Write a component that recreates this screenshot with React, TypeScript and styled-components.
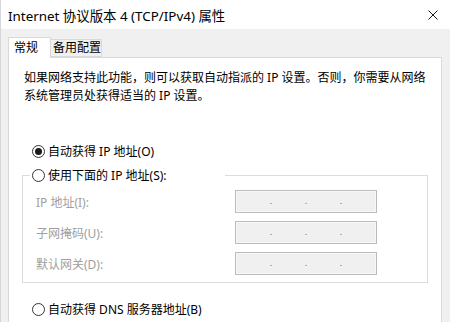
import React, { useState } from 'react';
import styled, { createGlobalStyle } from 'styled-components';

const GlobalStyle = createGlobalStyle`
  html, body {
    margin: 0;
    padding: 0;
    background: #f0f0f0;
  }
  * {
    box-sizing: border-box;
  }
`;

const FONT = `"Noto Sans", "Noto Sans CJK SC", sans-serif`;

type Mode = 'auto' | 'manual';

const App = () => {
  const [ipMode, setIpMode] = useState<Mode>('auto');
  const [dnsAuto, setDnsAuto] = useState(false);

  const fields = ['IP 地址(I):', '子网掩码(U):', '默认网关(D):'];

  return (
    <>
      <GlobalStyle />
      <Window>
        <TitleBar>
          <Title>Internet 协议版本 4 (TCP/IPv4) 属性</Title>
          <CloseButton aria-label="关闭">
            <svg width="10" height="10" viewBox="0 0 10 10">
              <path d="M0.5 0.5 L9.5 9.5 M9.5 0.5 L0.5 9.5" stroke="#1a1a1a" strokeWidth="1" fill="none" />
            </svg>
          </CloseButton>
        </TitleBar>
        <Body>
          <TabStrip>
            <Tab active>常规</Tab>
            <Tab>备用配置</Tab>
          </TabStrip>
          <Panel>
            <Description>
              如果网络支持此功能，则可以获取自动指派的 IP 设置。否则，你需要从网络
              <br />
              系统管理员处获得适当的 IP 设置。
            </Description>

            <RadioRow onClick={() => setIpMode('auto')}>
              <RadioCircle checked={ipMode === 'auto'} />
              <span>自动获得 IP 地址(O)</span>
            </RadioRow>

            <GroupBox>
              <GroupLegend onClick={() => setIpMode('manual')}>
                <RadioCircle checked={ipMode === 'manual'} />
                <span>使用下面的 IP 地址(S):</span>
              </GroupLegend>
              {fields.map((label) => (
                <FieldRow key={label}>
                  <FieldLabel>{label}</FieldLabel>
                  <IpBox>
                    <IpSegment />
                    <IpDot>.</IpDot>
                    <IpSegment />
                    <IpDot>.</IpDot>
                    <IpSegment />
                    <IpDot>.</IpDot>
                    <IpSegment />
                  </IpBox>
                </FieldRow>
              ))}
            </GroupBox>

            <DnsRow onClick={() => setDnsAuto(true)}>
              <RadioCircle checked={dnsAuto} />
              <span>自动获得 DNS 服务器地址(B)</span>
            </DnsRow>
          </Panel>
        </Body>
      </Window>
    </>
  );
};

export default App;

const Window = styled.div`
  width: 450px;
  height: 322px;
  overflow: hidden;
  border-left: 1px solid #d6d6d6;
  font-family: ${FONT};
  font-size: 12px;
  color: #000;
  background: #f0f0f0;
`;

const TitleBar = styled.div`
  display: flex;
  align-items: center;
  justify-content: space-between;
  height: 29px;
  padding: 1px 0 0 7px;
  background: #fff;
`;

const Title = styled.span`
  font-size: 13.4px;
  color: #000;
  white-space: nowrap;
`;

const CloseButton = styled.div`
  display: flex;
  align-items: center;
  justify-content: center;
  width: 46px;
  height: 28px;
  padding-left: 12px;
`;

const Body = styled.div`
  padding: 0 8px 0 7px;
`;

const TabStrip = styled.div`
  display: flex;
  align-items: flex-end;
  height: 28px;
  position: relative;
  z-index: 1;
`;

const Tab = styled.div<{ active?: boolean }>`
  display: flex;
  align-items: center;
  width: ${(p) => (p.active ? '43px' : '51px')};
  height: ${(p) => (p.active ? '21px' : '18px')};
  margin-bottom: ${(p) => (p.active ? '-1px' : '0')};
  padding: ${(p) => (p.active ? '0 0 1px 5px' : '0 0 0 2px')};
  background: ${(p) => (p.active ? '#fff' : '#f0f0f0')};
  border: 1px solid #d9d9d9;
  border-bottom: ${(p) => (p.active ? 'none' : '1px solid #d9d9d9')};
  border-left: ${(p) => (p.active ? '1px solid #d9d9d9' : 'none')};
  white-space: nowrap;
  line-height: 16px;
`;

const Panel = styled.div`
  height: 300px;
  padding: 11px 13px 0 13px;
  background: #fff;
  border: 1px solid #d9d9d9;
`;

const Description = styled.p`
  margin: 0 0 0 2px;
  line-height: 18px;
  white-space: nowrap;
`;

const RadioRow = styled.div`
  display: flex;
  align-items: center;
  gap: 3px;
  height: 19px;
  margin: 37px 0 0 10px;
  line-height: 19px;
  cursor: default;
  white-space: nowrap;
`;

const DnsRow = styled(RadioRow)`
  margin-top: 17px;
`;

const RadioCircle = styled.span<{ checked: boolean }>`
  position: relative;
  flex: none;
  width: 13px;
  height: 13px;
  border: 1px solid #333;
  border-radius: 50%;
  background: #fff;

  &::after {
    content: '';
    position: absolute;
    top: 2px;
    left: 2px;
    width: 7px;
    height: 7px;
    border-radius: 50%;
    background: #1a1a1a;
    display: ${(p) => (p.checked ? 'block' : 'none')};
  }
`;

const GroupBox = styled.fieldset`
  margin: 5px 0 0 0;
  padding: 5px 13px 7px 13px;
  border: 1px solid #dcdcdc;
  min-width: 0;
`;

const GroupLegend = styled.legend`
  display: flex;
  align-items: center;
  gap: 3px;
  width: 195px;
  height: 19px;
  margin-left: -6px;
  padding: 0 0 0 2px;
  line-height: 19px;
  white-space: nowrap;
  cursor: default;
`;

const FieldRow = styled.div`
  display: flex;
  align-items: center;
  justify-content: space-between;
  height: 23px;
  padding-right: 37px;
  & + & {
    margin-top: 8px;
  }
`;

const FieldLabel = styled.span`
  color: #a0a0a0;
  white-space: nowrap;
`;

const IpBox = styled.div`
  display: flex;
  align-items: center;
  width: 142px;
  height: 23px;
  padding: 0 1px;
  background: #f0f0f0;
  border: 1px solid #bcbcbc;
  box-shadow: inset 0 0 0 1px #f7f7f7;
`;

const IpSegment = styled.span`
  flex: 1;
`;

const IpDot = styled.span`
  flex: none;
  width: 2px;
  font-size: 9px;
  line-height: 9px;
  color: #6a6a6a;
  margin-top: -3px;
  display: flex;
  justify-content: center;
`;
